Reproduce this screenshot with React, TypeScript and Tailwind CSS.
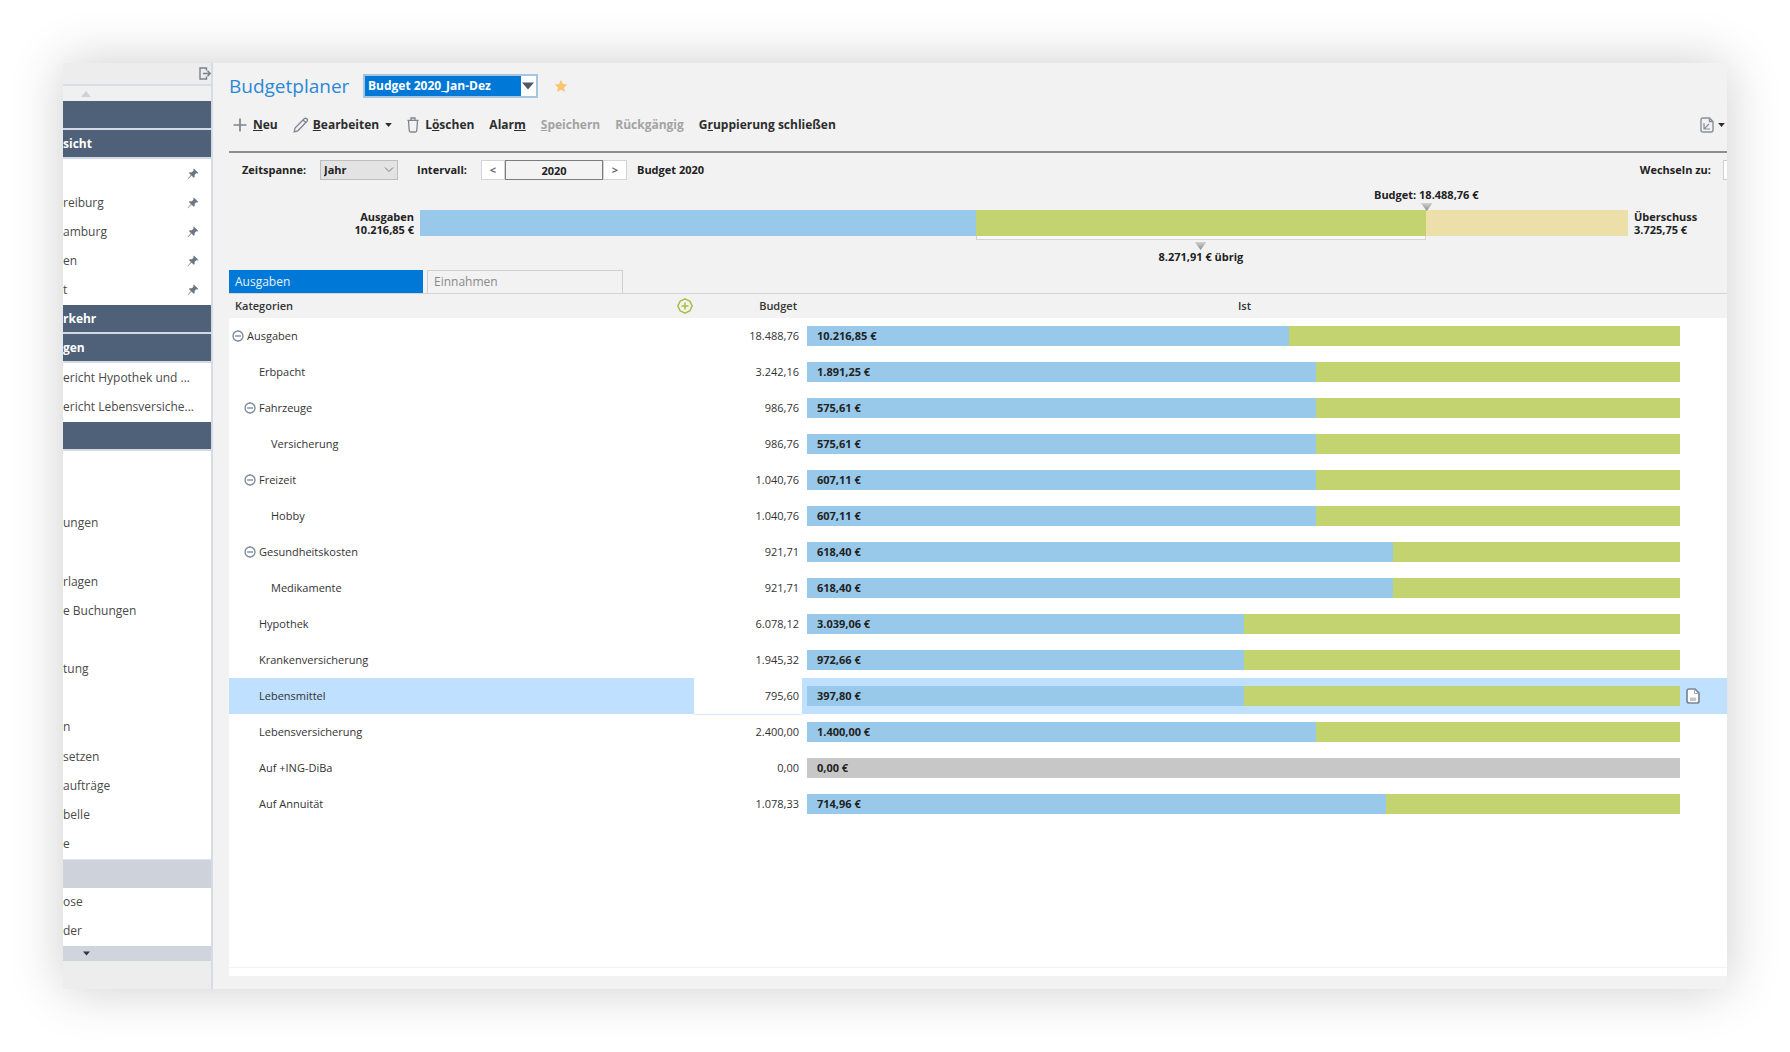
import { ReactNode } from 'react';

type SidebarEntry = {
  label?: string;
  kind?: 'header' | 'muted';
  pinned?: boolean;
};

type Category = {
  name: string;
  level: 0 | 1 | 2;
  open?: boolean;
  budget: string;
  actual: string;
  percent: number;
  selected?: boolean;
};

const sidebarEntries: SidebarEntry[] = [
  { kind: 'header' },
  { label: 'sicht', kind: 'header' },
  { pinned: true },
  { label: 'reiburg', pinned: true },
  { label: 'amburg', pinned: true },
  { label: 'en', pinned: true },
  { label: 't', pinned: true },
  { label: 'rkehr', kind: 'header' },
  { label: 'gen', kind: 'header' },
  { label: 'ericht Hypothek und ...' },
  { label: 'ericht Lebensversiche...' },
  { kind: 'header' },
  {},
  {},
  { label: 'ungen' },
  {},
  { label: 'rlagen' },
  { label: 'e Buchungen' },
  {},
  { label: 'tung' },
  {},
  { label: 'n' },
  { label: 'setzen' },
  { label: 'aufträge' },
  { label: 'belle' },
  { label: 'e' },
  { kind: 'muted' },
  { label: 'ose' },
  { label: 'der' },
];

const categories: Category[] = [
  { name: 'Ausgaben', level: 0, open: true, budget: '18.488,76', actual: '10.216,85 €', percent: 55.2 },
  { name: 'Erbpacht', level: 1, budget: '3.242,16', actual: '1.891,25 €', percent: 58.3 },
  { name: 'Fahrzeuge', level: 1, open: true, budget: '986,76', actual: '575,61 €', percent: 58.3 },
  { name: 'Versicherung', level: 2, budget: '986,76', actual: '575,61 €', percent: 58.3 },
  { name: 'Freizeit', level: 1, open: true, budget: '1.040,76', actual: '607,11 €', percent: 58.3 },
  { name: 'Hobby', level: 2, budget: '1.040,76', actual: '607,11 €', percent: 58.3 },
  { name: 'Gesundheitskosten', level: 1, open: true, budget: '921,71', actual: '618,40 €', percent: 67.1 },
  { name: 'Medikamente', level: 2, budget: '921,71', actual: '618,40 €', percent: 67.1 },
  { name: 'Hypothek', level: 1, budget: '6.078,12', actual: '3.039,06 €', percent: 50 },
  { name: 'Krankenversicherung', level: 1, budget: '1.945,32', actual: '972,66 €', percent: 50 },
  { name: 'Lebensmittel', level: 1, budget: '795,60', actual: '397,80 €', percent: 50, selected: true },
  { name: 'Lebensversicherung', level: 1, budget: '2.400,00', actual: '1.400,00 €', percent: 58.3 },
  { name: 'Auf +ING-DiBa', level: 1, budget: '0,00', actual: '0,00 €', percent: 0 },
  { name: 'Auf Annuität', level: 1, budget: '1.078,33', actual: '714,96 €', percent: 66.3 },
];

const indents = ['pl-[3px]', 'pl-[15px]', 'pl-[27px]'];

const PinIcon = () => (
  <svg viewBox="0 0 12 12" className="size-3" aria-hidden="true">
    <path
      d="M6.8.6 11.4 5l-1.2.5-1-.2-1.6 1.7.1 1.9-1 .8-2.2-2.3L.9 11.3l-.4-.4 3.4-3.8L1.9 5l.9-.8 2 .1 1.7-1.6-.2-1.2z"
      fill="#6b7683"
    />
  </svg>
);

const CollapseIcon = () => (
  <svg viewBox="0 0 12 13" className="h-[13px] w-3" fill="none" stroke="#77818c" aria-hidden="true">
    <path d="M7.5 3.5V1H1v11h6.5V9.5" strokeWidth="1.4" />
    <path d="M4 6.5h7M8.5 3.8l2.7 2.7-2.7 2.7" strokeWidth="1.4" />
  </svg>
);

const PlusIcon = () => (
  <svg viewBox="0 0 14 14" className="size-3.5" aria-hidden="true">
    <path d="M7 .5v13M.5 7h13" stroke="#7d868f" strokeWidth="1.7" />
  </svg>
);

const PencilIcon = () => (
  <svg viewBox="0 0 16 16" className="size-4" fill="none" stroke="#7d868f" strokeWidth="1.3" aria-hidden="true">
    <path d="M1.2 14.8 2 11 11.2 1.8q1.3-1.2 2.6 0t0 2.7L4.8 13.8zM10 3l2.8 2.8" />
  </svg>
);

const TrashIcon = () => (
  <svg viewBox="0 0 12 16" className="h-4 w-3" fill="none" stroke="#7d868f" strokeWidth="1.3" aria-hidden="true">
    <path d="M.4 3.4h11.2M4 3.2V1h4v2.2M1.5 3.5l.7 10q.1 1.5 1.5 1.5h4.6q1.4 0 1.5-1.5l.7-10" />
  </svg>
);

const ReportIcon = () => (
  <svg viewBox="0 0 14 16" className="h-4 w-3.5" fill="none" stroke="#85909b" strokeWidth="1.4" aria-hidden="true">
    <path d="M3 1h6.5L13 4.5V13q0 2-2 2H3q-2 0-2-2V3q0-2 2-2zM9.5 1v3.5H13" />
    <path d="M4 6v6h6M4.5 11.5 9 7" strokeWidth="1.2" />
  </svg>
);

const NoteIcon = () => (
  <svg viewBox="0 0 14 16" className="h-4 w-3.5" aria-hidden="true">
    <path
      d="M3.2 1H9l4 4.2V13q0 2-2 2H3.2Q1 15 1 13V3q0-2 2.2-2z"
      fill="#fff"
      stroke="#7b8796"
      strokeWidth="1.7"
    />
    <path d="M8.5 1.5v4H13" fill="none" stroke="#9aa3ae" />
    <path d="M4 9.5h6V13H4z" fill="#c3c7cc" />
  </svg>
);

const AddIcon = () => (
  <svg viewBox="0 0 16 16" className="size-4" fill="none" stroke="#a9bd3b" strokeWidth="1.5" aria-hidden="true">
    <path d="M8 .8 12.8 3.2 15.2 8l-2.4 4.8L8 15.2l-4.8-2.4L.8 8l2.4-4.800z" strokeLinejoin="round" />
    <path d="M8 4.5v7M4.5 8h7" />
  </svg>
);

const MinusIcon = () => (
  <svg viewBox="0 0 12 12" className="size-3" fill="none" stroke="#76879a" strokeWidth="1.3" aria-hidden="true">
    <circle cx="6" cy="6" r="5" />
    <path d="M3 6h6" />
  </svg>
);

const Caret = ({ className }: { className: string }) => (
  <svg viewBox="0 0 10 6" className={className} fill="currentColor" aria-hidden="true">
    <path d="M0 0h10L5 6z" />
  </svg>
);

const ToolbarButton = ({ children, disabled }: { children: ReactNode; disabled?: boolean }) => (
  <button
    type="button"
    disabled={disabled}
    className="flex items-center whitespace-nowrap text-[#2d2d2d] disabled:text-[#a3a3a3]"
  >
    {children}
  </button>
);

const Sidebar = () => (
  <aside className="flex w-[150px] shrink-0 flex-col border-r-2 border-[#d5dce6] bg-[#ededed] text-[12px] text-[#4a4a4a]">
    <div className="flex h-[21px] items-center justify-end">
      <button type="button" aria-label="Seitenleiste einklappen">
        <CollapseIcon />
      </button>
    </div>
    <button
      type="button"
      aria-label="Nach oben"
      className="flex h-[17px] items-center border-t-2 border-[#d9dfe8] bg-[#f0f0f0] pl-[18px] text-[#cfd3dd]"
    >
      <Caret className="h-1.5 w-2.5 rotate-180" />
    </button>
    <ul className="grid flex-1 auto-rows-fr bg-white">
      {sidebarEntries.map(({ label, kind, pinned }, index) => {
        if (kind) {
          return (
            <li
              key={index}
              className={
                kind === 'header'
                  ? 'flex min-h-6 items-center border-b-2 border-[#d3dae4] bg-[#4f6079] font-bold text-white'
                  : 'min-h-6 border-t border-[#dfe5ec] bg-[#ced2db]'
              }
            >
              {label}
            </li>
          );
        }
        return (
          <li key={index} className="flex min-h-6 items-center justify-between pr-3">
            <a href="#" className="whitespace-nowrap">
              {label}
            </a>
            {pinned && <PinIcon />}
          </li>
        );
      })}
    </ul>
    <button
      type="button"
      aria-label="Nach unten"
      className="flex h-[15px] items-center bg-[#d0d4dd] pl-5 text-[#2f3640]"
    >
      <Caret className="h-[5px] w-[7px]" />
    </button>
    <div className="h-7" />
  </aside>
);

const Header = () => (
  <header>
    <div className="flex h-[46px] items-center">
      <h1 className="w-[134px] text-[19px] text-[#2b88d8]">Budgetplaner</h1>
      <div className="relative flex h-6 w-[175px] border-2 border-[#a8c5e0] bg-white">
        <select
          aria-label="Budget auswählen"
          className="h-5 w-[156px] appearance-none bg-[#0078d7] pl-[3px] text-[12px] font-bold text-white"
        >
          <option>Budget 2020_Jan-Dez</option>
        </select>
        <Caret className="pointer-events-none absolute top-1.5 right-[2px] h-2 w-3 text-[#4b5868]" />
      </div>
      <button type="button" aria-label="Favorit" className="ml-4">
        <svg viewBox="0 0 14 14" className="size-3.5" aria-hidden="true">
          <path d="m7 .8 1.9 4.2 4.5.5-3.4 3 1 4.5-4-2.3L3 13l1-4.500-3.400-3L5.100 5z" fill="#f7c66f" />
        </svg>
      </button>
    </div>
    <div className="flex h-8 items-center text-[12px] font-bold">
      <div className="flex flex-1 items-center gap-[15px] pl-1">
        <ToolbarButton>
          <PlusIcon />
          <span className="ml-1.5">
            <u>N</u>eu
          </span>
        </ToolbarButton>
        <ToolbarButton>
          <PencilIcon />
          <span className="mr-1.5 ml-1">
            <u>B</u>earbeiten
          </span>
          <Caret className="h-1 w-[7px]" />
        </ToolbarButton>
        <ToolbarButton>
          <TrashIcon />
          <span className="ml-1.5">
            L<u>ö</u>schen
          </span>
        </ToolbarButton>
        <ToolbarButton>
          <span>
            Alar<u>m</u>
          </span>
        </ToolbarButton>
        <ToolbarButton disabled>
          <span>
            <u>S</u>peichern
          </span>
        </ToolbarButton>
        <ToolbarButton disabled>Rückgängig</ToolbarButton>
        <ToolbarButton>
          <span>
            G<u>r</u>uppierung schließen
          </span>
        </ToolbarButton>
      </div>
      <button type="button" aria-label="Bericht" className="flex items-center gap-1 pr-0.5 text-[#2d2d2d]">
        <ReportIcon />
        <Caret className="h-1 w-[7px]" />
      </button>
    </div>
  </header>
);

const FilterBar = () => (
  <div className="mt-[10px] flex h-9 items-center overflow-hidden border-t-2 border-[#8e8e8e] pl-[13px] text-[11px] font-bold text-[#222]">
    <label htmlFor="period" className="w-[78px]">
      Zeitspanne:
    </label>
    <div className="relative">
      <select
        id="period"
        className="h-5 w-[78px] appearance-none border border-[#bdbdbd] bg-[#e3e3e3] pl-[3px] font-bold"
      >
        <option>Jahr</option>
      </select>
      <svg
        viewBox="0 0 10 6"
        className="pointer-events-none absolute top-[7px] right-1 h-1.5 w-2.5"
        fill="none"
        stroke="#777"
        aria-hidden="true"
      >
        <path d="m1 .5 4 4 4-4" />
      </svg>
    </div>
    <label htmlFor="interval" className="ml-[19px] w-16">
      Intervall:
    </label>
    <button type="button" aria-label="Zurück" className="h-5 w-6 border border-[#d4d4d4] bg-white text-[#666]">
      &lt;
    </button>
    <input
      id="interval"
      defaultValue="2020"
      className="h-5 w-[98px] border border-[#7c7c7c] bg-[#f3f3f3] text-center font-bold"
    />
    <button type="button" aria-label="Weiter" className="h-5 w-6 border border-[#d4d4d4] bg-white text-[#666]">
      &gt;
    </button>
    <span className="ml-[10px] flex-1">Budget 2020</span>
    <label htmlFor="switch">Wechseln zu:</label>
    <div className="ml-3 w-1 overflow-hidden">
      <select id="switch" className="h-5 w-16 appearance-none border border-[#cfcfcf] bg-white" />
    </div>
  </div>
);

const Marker = () => (
  <svg viewBox="0 0 12 8" className="h-2 w-3" aria-hidden="true">
    <defs>
      <linearGradient id="marker" x2="0" y2="1">
        <stop stopColor="#d2d2d2" />
        <stop offset="1" stopColor="#8a8a8a" />
      </linearGradient>
    </defs>
    <path d="M0 0h12L6 8z" fill="url(#marker)" />
  </svg>
);

const Summary = () => (
  <div className="flex gap-1.5 pt-[23px] pb-[34px] text-[11px] leading-[13px] font-bold text-[#222]">
    <div className="w-[185px] shrink-0 text-right">
      Ausgaben
      <br />
      10.216,85 €
    </div>
    <div className="relative flex h-[26px] flex-1">
      <div className="w-[46%] bg-[#99c9ea]" />
      <div className="relative w-[37.3%] bg-[#c2d370]">
        <div className="absolute inset-x-0 top-full h-1 border border-t-0 border-[#d4d4d4] bg-[#f8f8f8]" />
        <div className="absolute top-8 left-1/2 flex -translate-x-1/2 flex-col items-center whitespace-nowrap">
          <Marker />
          8.271,91 € übrig
        </div>
        <div className="absolute bottom-[25px] left-full flex -translate-x-1/2 flex-col items-center gap-0.5 whitespace-nowrap">
          Budget: 18.488,76 €
          <Marker />
        </div>
      </div>
      <div className="flex-1 bg-[#ecdfaa]" />
    </div>
    <div className="w-[93px] shrink-0">
      Überschuss
      <br />
      3.725,75 €
    </div>
  </div>
);

const Tabs = () => (
  <div role="tablist" className="flex gap-1 border-b border-[#d4d4d4] text-[12px]">
    <button type="button" role="tab" aria-selected="true" className="h-[23px] w-[194px] bg-[#0078d7] pl-1.5 text-left text-[#e8f3fc]">
      Ausgaben
    </button>
    <button
      type="button"
      role="tab"
      aria-selected="false"
      className="h-[23px] w-[196px] border border-b-0 border-[#cfcfcf] pl-1.5 text-left text-[#8a8a8a]"
    >
      Einnahmen
    </button>
  </div>
);

const CategoryRow = ({ name, level, open, budget, actual, percent, selected }: Category) => (
  <tr className="h-9">
    <td className={selected ? 'bg-[#bfe0ff]' : ''}>
      <div className={`flex items-center ${indents[level]}`}>
        <span className="w-[15px]">
          {open && (
            <button type="button" aria-label={`${name} zuklappen`} className="block">
              <MinusIcon />
            </button>
          )}
        </span>
        {name}
      </div>
    </td>
    <td className={selected ? 'border-b border-[#d6ebff] pr-[3px] text-right' : 'pr-[3px] text-right'}>{budget}</td>
    <td className={selected ? 'bg-[#bfe0ff]' : ''}>
      <div className="flex pl-[5px]">
        <div className={percent ? 'relative flex h-5 flex-1 bg-[#c2d370]' : 'relative flex h-5 flex-1 bg-[#c7c7c7]'}>
          <div className="bg-[#99c9ea]" style={{ width: `${percent}%` }} />
          <span className="absolute inset-y-0 left-[10px] leading-5 font-bold text-[#222]">{actual}</span>
        </div>
        <div className="flex w-[47px] items-center pl-1.5">
          {selected && (
            <button type="button" aria-label="Notiz">
              <NoteIcon />
            </button>
          )}
        </div>
      </div>
    </td>
  </tr>
);

const CategoryTable = () => (
  <div className="flex flex-1 flex-col bg-white">
    <table className="w-full table-fixed border-collapse text-[11px] text-[#333]">
      <colgroup>
        <col className="w-[465px]" />
        <col className="w-[108px]" />
        <col />
      </colgroup>
      <thead>
        <tr className="h-6 bg-[#f2f2f2]">
          <th scope="col" className="pr-[1px] pl-1.5 text-left font-semibold">
            <div className="flex items-center justify-between">
              Kategorien
              <button type="button" aria-label="Kategorie hinzufügen">
                <AddIcon />
              </button>
            </div>
          </th>
          <th scope="col" className="pr-[5px] text-right font-semibold">
            Budget
          </th>
          <th scope="col" className="pr-10 text-center font-semibold">
            Ist
          </th>
        </tr>
      </thead>
      <tbody>
        {categories.map((category) => (
          <CategoryRow key={category.name} {...category} />
        ))}
      </tbody>
    </table>
    <div className="flex-1" />
    <div className="h-[9px] border-t border-[#f3f3f3]" />
  </div>
);

export default function App() {
  return (
    <div className="flex min-h-screen bg-white p-[63px] font-['Open_Sans','Noto_Sans',sans-serif]">
      <div className="flex min-w-0 flex-1 overflow-hidden bg-[#f2f2f2] shadow-[0_0_50px_rgba(0,0,0,0.2)]">
        <Sidebar />
        <main className="flex min-w-0 flex-1 flex-col pb-[13px] pl-4">
          <Header />
          <FilterBar />
          <Summary />
          <Tabs />
          <CategoryTable />
        </main>
      </div>
    </div>
  );
}
